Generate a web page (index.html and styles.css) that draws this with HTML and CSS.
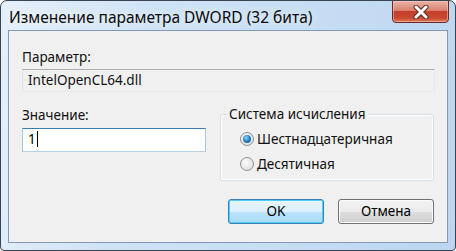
FILE: index.html
```html
<!DOCTYPE html>
<html lang="ru">
<head>
<meta charset="UTF-8">
<title>Изменение параметра DWORD (32 бита)</title>
<link rel="stylesheet" href="styles.css">
</head>
<body>
<div class="window">
  <!-- Title bar -->
  <div class="titlebar">
    <div class="title">Изменение параметра DWORD (32 бита)</div>
    <div class="close-btn">
      <svg width="22" height="14" viewBox="0 0 22 14">
        <path d="M6 2 L16 12 M16 2 L6 12" stroke="#5a2a22" stroke-width="5" stroke-linecap="round"/>
        <path d="M6 2 L16 12 M16 2 L6 12" stroke="#ffffff" stroke-width="3" stroke-linecap="round"/>
      </svg>
    </div>
  </div>

  <!-- Dialog body -->
  <div class="client">
    <div class="label">Параметр:</div>
    <div class="field readonly">IntelOpenCL64.dll</div>

    <div class="middle">
      <div class="value-col">
        <div class="label">Значение:</div>
        <div class="field edit">1<span class="caret"></span></div>
      </div>
      <div class="groupbox">
        <div class="legend">Система исчисления</div>
        <div class="radio-row">
          <span class="radio checked"><span class="dot"></span></span>
          <span>Шестнадцатеричная</span>
        </div>
        <div class="radio-row">
          <span class="radio"></span>
          <span>Десятичная</span>
        </div>
      </div>
    </div>

    <div class="buttons">
      <div class="button default">OK</div>
      <div class="button">Отмена</div>
    </div>
  </div>
</div>
</body>
</html>
```

FILE: styles.css
```css
body {
    margin: 0;
    padding: 0;
    font-family: 'Noto Sans', 'DejaVu Sans', sans-serif;
    font-size: 13.5px;
    color: #111111;
    background: #ffffff;
}

.window {
    width: 456px;
    height: 251px;
    box-sizing: border-box;
    border: 1px solid #3a4350;
    border-radius: 7px 7px 4px 4px;
    background: linear-gradient(100deg, #e6f0fa 0%, #cfe3f6 30%, #c4dcf3 70%, #bcd6f1 100%);
    display: flex;
    flex-direction: column;
    overflow: hidden;
}

/* Title bar */
.titlebar {
    height: 29px;
    display: flex;
    justify-content: space-between;
    align-items: flex-start;
    padding-left: 8px;
    padding-right: 6px;
}

.title {
    margin-top: 5px;
    font-size: 15.5px;
    color: #0a0a0a;
    text-shadow: 0 0 8px rgba(255, 255, 255, 0.9);
}

.close-btn {
    width: 57px;
    height: 23px;
    margin-top: -1px;
    box-sizing: border-box;
    border: 1px solid #6b2a20;
    border-radius: 0 0 4px 4px;
    background: linear-gradient(#eab4a8 0%, #d9826f 45%, #c3402a 50%, #c8482f 80%, #dd7a5c 100%);
    display: flex;
    justify-content: center;
    align-items: center;
    box-shadow: inset 0 0 0 1px rgba(255, 210, 200, 0.5);
}

/* Client area */
.client {
    flex: 1;
    margin: 0 7px 7px 7px;
    background: #f0f0f0;
    border: 1px solid #8499b1;
    padding: 17px 12px 0 13px;
    display: flex;
    flex-direction: column;
}

.label {
    height: 18px;
    line-height: 18px;
}

.field {
    box-sizing: border-box;
    height: 23px;
    line-height: 20px;
    padding: 0 5px;
    border: 1px solid #abadb3;
    border-color: #abadb3 #e3e9ef #e3e9ef #e2e3ea;
}

.readonly {
    margin-top: 3px;
    background: #f0f0f0;
}

.middle {
    margin-top: 14px;
    display: flex;
    gap: 15px;
}

.value-col {
    width: 184px;
}

.edit {
    margin-top: 4px;
    height: 24px;
    background: #ffffff;
    border-color: #3d7bad #a4c9e3 #b5cfe7 #a4c9e3;
    color: #000;
}

.caret {
    display: inline-block;
    width: 1px;
    height: 16px;
    background: #000;
    vertical-align: -3px;
    margin-left: 1px;
}

.groupbox {
    position: relative;
    width: 214px;
    height: 67px;
    margin-top: 8px;
    margin-left: -1px;
    box-sizing: border-box;
    border: 1px solid #d5dfe5;
    border-radius: 3px;
    box-shadow: inset 0 0 0 1px #ffffff;
    padding: 11px 0 0 19px;
}

.legend {
    position: absolute;
    left: 6px;
    top: -10px;
    padding: 0 2px;
    background: #f0f0f0;
    line-height: 18px;
}

.radio-row {
    display: flex;
    align-items: center;
    gap: 3px;
    height: 25px;
}

.radio {
    width: 14px;
    height: 14px;
    box-sizing: border-box;
    border-radius: 50%;
    border: 1px solid #8f8f8f;
    background: radial-gradient(circle at 40% 40%, #fcfcfc, #d8d8d8);
    display: flex;
    justify-content: center;
    align-items: center;
}

.radio .dot {
    width: 8px;
    height: 8px;
    border-radius: 50%;
    background: radial-gradient(circle at 40% 35%, #9ad6f7 0%, #2b8ad0 45%, #0d4a84 100%);
}

/* Buttons */
.buttons {
    margin-top: auto;
    margin-bottom: 18px;
    display: flex;
    justify-content: flex-end;
    gap: 14px;
    padding-right: 1px;
}

.button {
    width: 96px;
    height: 25px;
    box-sizing: border-box;
    border: 1px solid #707070;
    border-radius: 3px;
    background: linear-gradient(#f2f2f2 0%, #ebebeb 50%, #dddddd 51%, #cfcfcf 100%);
    box-shadow: inset 0 0 0 1px #fcfcfc;
    text-align: center;
    line-height: 23px;
    color: #000;
}

.button.default {
    border-color: #3c7fb1;
    background: linear-gradient(#eaf6fd 0%, #d9f0fc 50%, #bee6fd 51%, #a7d9f5 100%);
    box-shadow: inset 0 0 0 1px #48d0fc;
}
```
